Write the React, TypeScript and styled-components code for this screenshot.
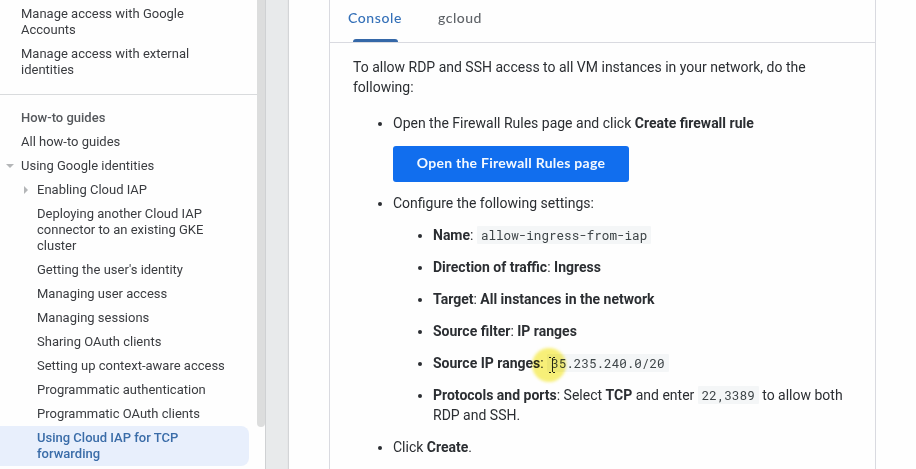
import React from "react";
import styled, { createGlobalStyle, css } from "styled-components";

const GlobalStyle = createGlobalStyle`
  * { box-sizing: border-box; }
  body {
    margin: 0;
    overflow: hidden;
    background: #fefefe;
    color: #2b2e32;
    font-family: Roboto, "Liberation Sans", sans-serif;
  }
`;

const Page = styled.div`
  display: flex;
  width: 916px;
  height: 469px;
  overflow: hidden;
  background: #e8eaeb;
`;

const Sidebar = styled.aside`
  display: flex;
  width: 266px;
  flex: none;
  background: #fefefe;
  border-right: 1px solid #cfd1d3;
`;

const Nav = styled.nav`
  width: 257px;
  flex: none;
  padding-top: 2px;
`;

const ScrollThumb = styled.div`
  width: 8px;
  height: 427px;
  background: #dcdddd;
  border-radius: 0 0 4px 4px;
`;

const NavItem = styled.a<{ $level?: number; $active?: boolean; $heading?: boolean }>`
  display: flex;
  position: relative;
  width: 249px;
  padding: 4px 16px 4px ${(p) => (p.$level ? 37 : 21)}px;
  font-size: 13px;
  line-height: 16px;
  white-space: pre-line;
  color: #3a3c40;
  ${(p) => p.$heading && css`
    font-weight: 500;
    color: #55585c;
  `}
  ${(p) => p.$active && css`
    font-weight: 500;
    color: #3a6ca8;
    background: #e8effc;
    border-radius: 0 8px 8px 0;
  `}
`;

const Divider = styled.hr`
  height: 1px;
  margin: 12px 0 11px;
  border: 0;
  background: #d9dbdd;
`;

const Arrow = styled.svg<{ $left: number }>`
  position: absolute;
  left: ${(p) => p.$left}px;
  top: 8px;
  width: 9px;
  height: 9px;
  fill: #b4b6b8;
`;

const Main = styled.main`
  flex: 1;
  margin-left: 23px;
  padding-left: 40px;
  background: #fefefe;
  box-shadow: -1px 0 1px #d3d5d7;
`;

const Panel = styled.section`
  width: 547px;
  height: 469px;
  border: solid #d9dae0;
  border-width: 0 1px;
`;

const Tabs = styled.div`
  display: flex;
  height: 43px;
  padding-left: 18px;
  gap: 36px;
  border-bottom: 1px solid #d9dae0;
`;

const Tab = styled.div<{ $active?: boolean }>`
  display: flex;
  flex-direction: column;
  justify-content: space-between;
  align-items: center;
  padding-top: 8px;
  font: 500 14px/20px Lato, sans-serif;
  letter-spacing: ${(p) => (p.$active ? 0.6 : 0.5)}px;
  color: ${(p) => (p.$active ? "#3470b8" : "#5f6368")};
`;

const Indicator = styled.div`
  width: 45px;
  height: 3px;
  background: #3568a8;
  border-radius: 3px 3px 0 0;
`;

const Content = styled.article`
  padding: 14px 22px 0 23px;
  font-size: 14px;
  line-height: 20px;
`;

const Paragraph = styled.p`
  margin: 0 0 16px;
`;

const List = styled.ul`
  margin: 0;
  padding-left: 40px;
  list-style-type: disc;
`;

const Item = styled.li`
  margin-bottom: 12px;
  & > ul { margin-top: 12px; }
`;

const Strong = styled.strong`
  font-weight: 700;
`;

const Button = styled.button`
  display: block;
  width: 236px;
  height: 36px;
  margin-top: 13px;
  margin-bottom: 11px;
  padding: 0 0 2px;
  border: 0;
  border-radius: 3px;
  background: #116eee;
  color: #f4f9ff;
  font: 700 14px/20px Lato, sans-serif;
  letter-spacing: 0.25px;
`;

const ButtonItem = styled(Item)`
  height: 80px;
  margin-bottom: 0;
`;

const Code = styled.code`
  padding: 1px 4px;
  border-radius: 1px;
  background: #f4f6f7;
  color: #3d4447;
  font: 12.6px/16px "Roboto Mono", "Liberation Mono", monospace;
`;

const PointerSpot = styled.span`
  display: inline-block;
  position: relative;
  width: 0;
  height: 0;
`;

const Halo = styled.span`
  position: absolute;
  left: -15px;
  top: -20px;
  width: 34px;
  height: 34px;
  border-radius: 50%;
  background: #f8f078;
  mix-blend-mode: multiply;
  filter: blur(1.5px);
`;

const Cursor = styled.svg`
  position: absolute;
  left: 1px;
  top: -11px;
  width: 8px;
  height: 16px;
  stroke: #242414;
  fill: none;
`;

export default function App() {
  const subPages = [
    "Deploying another Cloud IAP\nconnector to an existing GKE\ncluster",
    "Getting the user's identity",
    "Managing user access",
    "Managing sessions",
    "Sharing OAuth clients",
    "Setting up context-aware access",
    "Programmatic authentication",
    "Programmatic OAuth clients",
  ];

  return (
    <>
      <GlobalStyle />
      <Page>
        <Sidebar>
          <Nav>
            <NavItem>{"Manage access with Google\nAccounts"}</NavItem>
            <NavItem>{"Manage access with external\nidentities"}</NavItem>
            <Divider />
            <NavItem $heading>How-to guides</NavItem>
            <NavItem>All how-to guides</NavItem>
            <NavItem>
              <Arrow $left={6} viewBox="0 0 9 9"><path d="M0 2h8L4 6z" /></Arrow>
              Using Google identities
            </NavItem>
            <NavItem $level={1}>
              <Arrow $left={23} viewBox="0 0 9 9"><path d="M1 0l4 4-4 4z" /></Arrow>
              Enabling Cloud IAP
            </NavItem>
            {subPages.map((label) => (
              <NavItem key={label} $level={1}>{label}</NavItem>
            ))}
            <NavItem $level={1} $active>{"Using Cloud IAP for TCP\nforwarding"}</NavItem>
          </Nav>
          <ScrollThumb />
        </Sidebar>
        <Main>
          <Panel>
            <Tabs>
              <Tab $active>Console<Indicator /></Tab>
              <Tab>gcloud</Tab>
            </Tabs>
            <Content>
              <Paragraph>
                To allow RDP and SSH access to all VM instances in your network, do the<br />following:
              </Paragraph>
              <List>
                <ButtonItem>
                  Open the Firewall Rules page and click <Strong>Create firewall rule</Strong>
                  <Button>Open the Firewall Rules page</Button>
                </ButtonItem>
                <Item>
                  Configure the following settings:
                  <List>
                    <Item><Strong>Name</Strong>: <Code>allow-ingress-from-iap</Code></Item>
                    <Item><Strong>Direction of traffic</Strong>: <Strong>Ingress</Strong></Item>
                    <Item><Strong>Target</Strong>: <Strong>All instances in the network</Strong></Item>
                    <Item><Strong>Source filter</Strong>: <Strong>IP ranges</Strong></Item>
                    <Item>
                      <Strong>Source IP ranges</Strong>:{" "}
                      <PointerSpot>
                        <Halo />
                        <Cursor viewBox="0 0 8 16">
                          <path d="M1 .5h2M5 .5h2M1 15.5h2M5 15.5h2M4.5 1v14" />
                        </Cursor>
                      </PointerSpot>
                      <Code>35.235.240.0/20</Code>
                    </Item>
                    <Item>
                      <Strong>Protocols and ports</Strong>: Select <Strong>TCP</Strong> and enter{" "}
                      <Code>22,3389</Code> to allow both<br />RDP and SSH.
                    </Item>
                  </List>
                </Item>
                <Item>Click <Strong>Create</Strong>.</Item>
              </List>
            </Content>
          </Panel>
        </Main>
      </Page>
    </>
  );
}
